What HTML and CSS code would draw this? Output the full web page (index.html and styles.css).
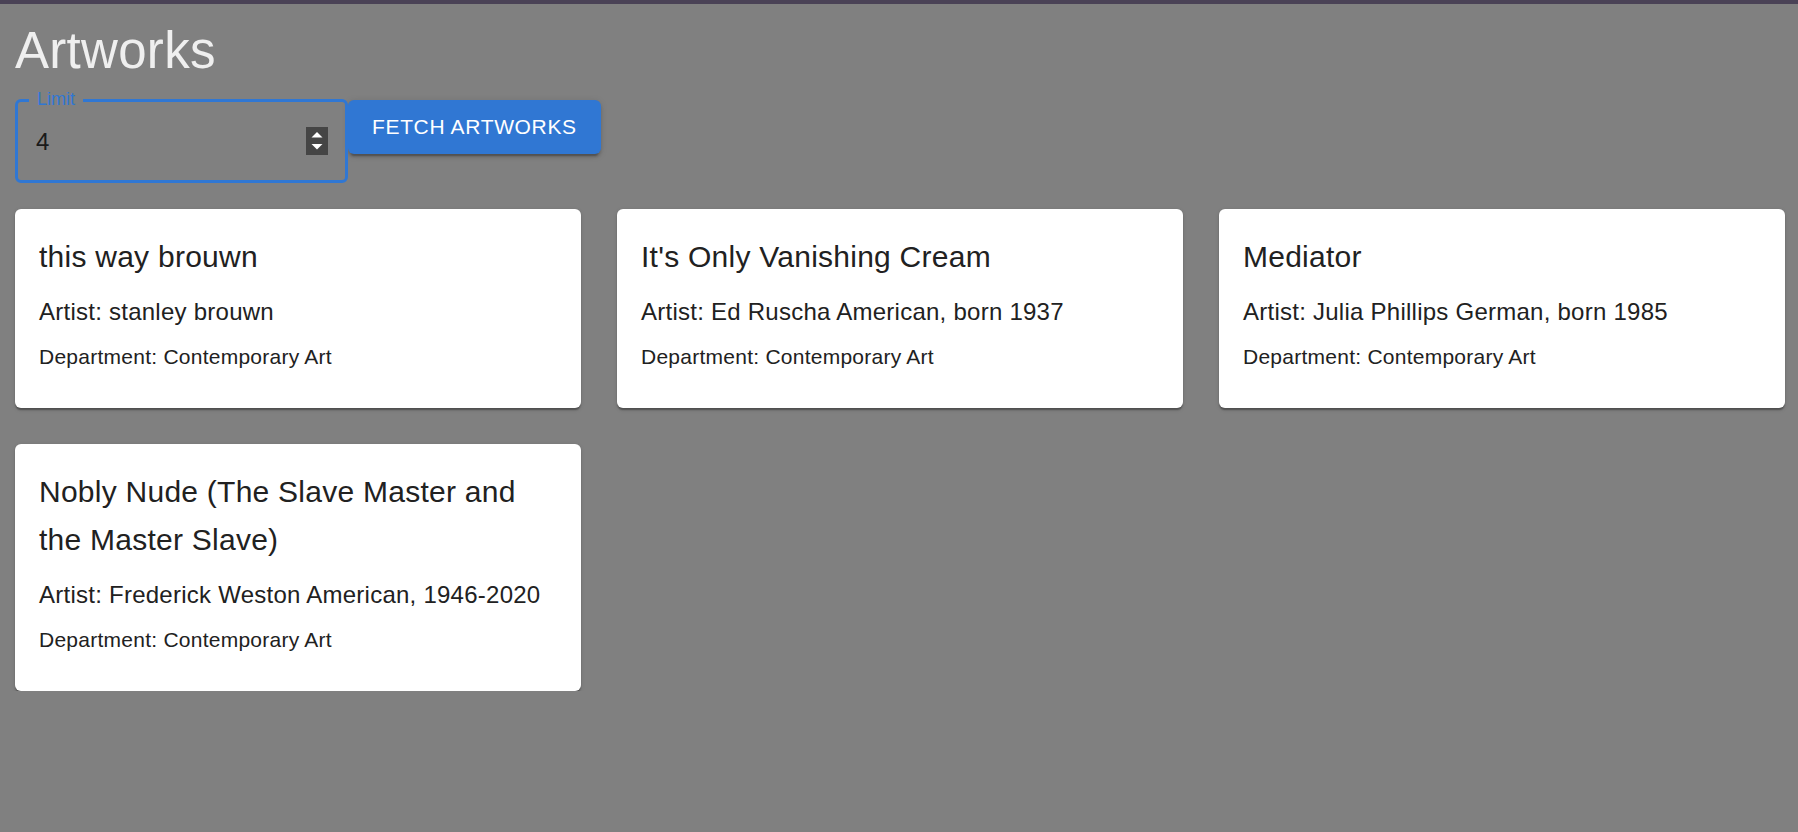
FILE: index.html
```html
<!DOCTYPE html>
<html lang="en">
<head>
<meta charset="utf-8">
<title>Artworks</title>
<link rel="stylesheet" href="styles.css">
</head>
<body>
<div class="topbar"></div>
<main class="page">
  <h1 class="page-title">Artworks</h1>
  <div class="controls">
    <div class="field">
      <span class="field-label">Limit</span>
      <input class="field-input" type="text" value="4">
      <svg class="spinner" width="22" height="28" viewBox="0 0 22 28" aria-hidden="true">
        <rect x="0" y="0" width="22" height="28" fill="#454545"/>
        <polygon points="11,5 16.5,10.5 5.5,10.5" fill="#ffffff"/>
        <polygon points="5.5,17 16.5,17 11,22.5" fill="#ffffff"/>
      </svg>
    </div>
    <button class="fetch-btn" type="button">FETCH ARTWORKS</button>
  </div>
  <section class="grid">
    <article class="card">
      <h2 class="card-title">this way brouwn</h2>
      <p class="card-artist">Artist: stanley brouwn</p>
      <p class="card-dept">Department: Contemporary Art</p>
    </article>
    <article class="card">
      <h2 class="card-title">It's Only Vanishing Cream</h2>
      <p class="card-artist">Artist: Ed Ruscha American, born 1937</p>
      <p class="card-dept">Department: Contemporary Art</p>
    </article>
    <article class="card">
      <h2 class="card-title">Mediator</h2>
      <p class="card-artist">Artist: Julia Phillips German, born 1985</p>
      <p class="card-dept">Department: Contemporary Art</p>
    </article>
    <article class="card">
      <h2 class="card-title">Nobly Nude (The Slave Master and the Master Slave)</h2>
      <p class="card-artist">Artist: Frederick Weston American, 1946-2020</p>
      <p class="card-dept">Department: Contemporary Art</p>
    </article>
  </section>
</main>
</body>
</html>
```
FILE: styles.css
```css
* { box-sizing: border-box; }

html, body {
  margin: 0;
  padding: 0;
  background: #808080;
  font-family: "Liberation Sans", Arial, sans-serif;
  min-height: 100%;
}

.topbar {
  height: 4px;
  background: #4a4256;
}

.page {
  padding: 0 13px 0 15px;
}

.page-title {
  margin: 15px 0 0 0;
  font-size: 51px;
  line-height: 63px;
  font-weight: 400;
  letter-spacing: 0.3px;
  color: #efefef;
}

.controls {
  display: flex;
  align-items: flex-start;
  margin-top: 17px;
}

.field {
  position: relative;
  width: 333px;
  height: 84px;
  border: 3px solid #3077d3;
  border-radius: 6px;
  display: flex;
  align-items: center;
  padding: 0 17px 0 18px;
}

.field-label {
  position: absolute;
  top: -12px;
  left: 11px;
  padding: 0 8px;
  background: #808080;
  color: #3077d3;
  font-size: 18px;
  line-height: 18px;
}

.field-input {
  flex: 1;
  min-width: 0;
  border: 0;
  outline: none;
  background: transparent;
  font-family: "Liberation Sans", Arial, sans-serif;
  font-size: 24px;
  color: #1a1a1a;
  padding: 0;
  margin: 0;
  margin-top: 2px;
}

.spinner {
  display: block;
  flex: none;
}

.fetch-btn {
  margin-top: 1px;
  height: 54px;
  padding: 0 24px;
  border: 0;
  border-radius: 6px;
  background: #3077d3;
  color: #ffffff;
  font-family: "Liberation Sans", Arial, sans-serif;
  font-size: 21px;
  letter-spacing: 0.65px;
  font-weight: 400;
  box-shadow: 0 4.5px 1.5px -3px rgba(0,0,0,0.2), 0 3px 3px 0 rgba(0,0,0,0.14), 0 1.5px 7.5px 0 rgba(0,0,0,0.12);
  cursor: pointer;
}

.grid {
  display: grid;
  grid-template-columns: repeat(3, 1fr);
  column-gap: 36px;
  row-gap: 36px;
  margin-top: 26px;
  align-items: start;
}

.card {
  background: #ffffff;
  border-radius: 6px;
  padding: 24px 24px 36px;
  box-shadow: 0 3px 1.5px -1.5px rgba(0,0,0,0.2), 0 1.5px 1.5px 0 rgba(0,0,0,0.14), 0 1.5px 4.5px 0 rgba(0,0,0,0.12);
  color: #212121;
  letter-spacing: 0.25px;
}

.card-title {
  margin: 0 0 13px 0;
  font-size: 30px;
  line-height: 48px;
  font-weight: 400;
}

.card-artist {
  margin: 0 0 12px 0;
  font-size: 24px;
  line-height: 36px;
}

.card-dept {
  margin: 0;
  font-size: 21px;
  line-height: 30px;
}
```
